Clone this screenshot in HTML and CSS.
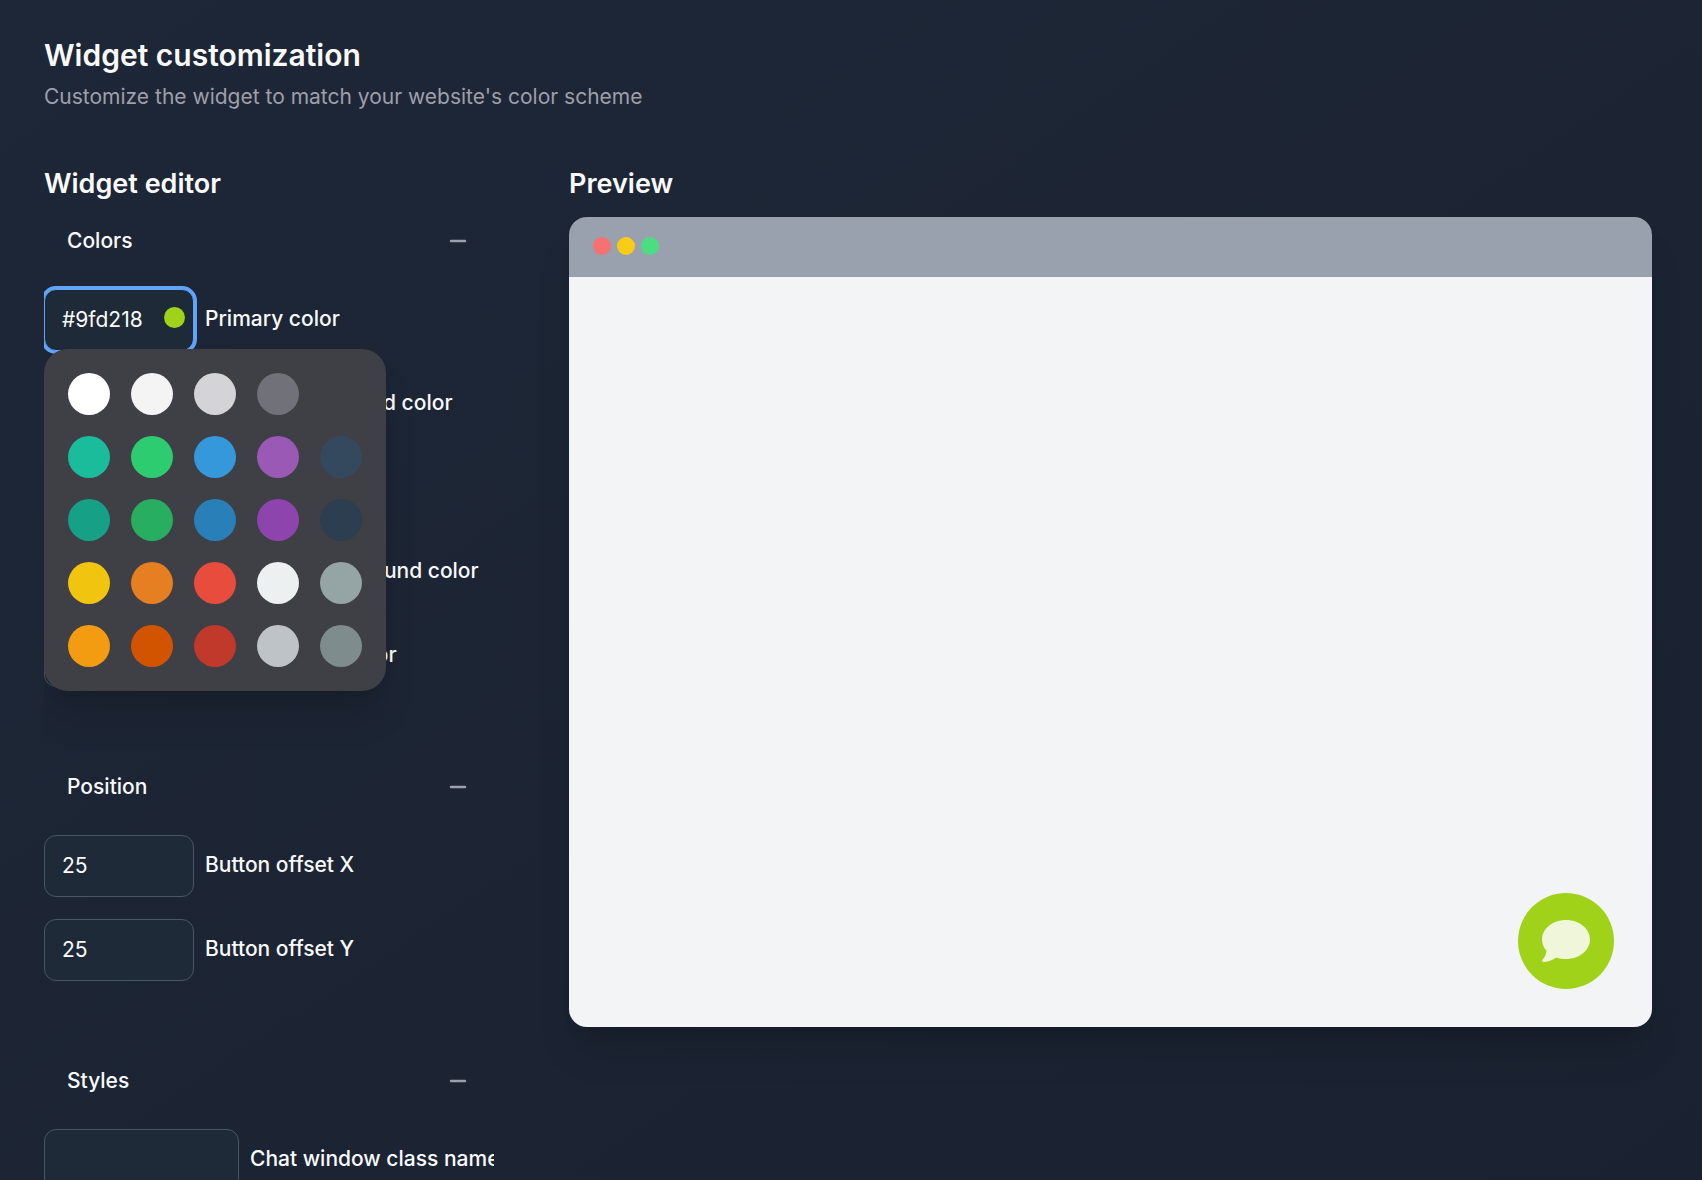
FILE: index.html
```html
<!DOCTYPE html>
<html lang="en">
<head>
    <meta charset="UTF-8">
    <meta name="viewport" content="width=device-width, initial-scale=1.0">
    <title>Widget customization</title>
    <link rel="stylesheet" href="styles.css">
</head>
<body>
    <main class="page">
        <header class="page-header">
            <h1>Widget customization</h1>
            <p>Customize the widget to match your website's color scheme</p>
        </header>

        <div class="columns">
            <section class="editor">
                <h2>Widget editor</h2>

                <div class="group">
                    <button type="button" class="group-toggle" aria-expanded="true">
                        Colors
                        <svg class="minus" viewBox="0 0 18 18" aria-hidden="true"><path d="M2 9h14"/></svg>
                    </button>
                    <div class="fields">
                        <div class="field">
                            <div class="color-input">
                                <input type="text" class="input focused" id="primary" value="#9fd218">
                                <span class="current-color"></span>
                                <div class="palette">
                                    <button type="button" class="swatch white" aria-label="White"></button>
                                    <button type="button" class="swatch gray-100" aria-label="Light gray"></button>
                                    <button type="button" class="swatch gray-300" aria-label="Gray"></button>
                                    <button type="button" class="swatch gray-500" aria-label="Medium gray"></button>
                                    <button type="button" class="swatch gray-700" aria-label="Dark gray"></button>
                                    <button type="button" class="swatch turquoise" aria-label="Turquoise"></button>
                                    <button type="button" class="swatch emerald" aria-label="Emerald"></button>
                                    <button type="button" class="swatch river" aria-label="Peter river"></button>
                                    <button type="button" class="swatch amethyst" aria-label="Amethyst"></button>
                                    <button type="button" class="swatch asphalt" aria-label="Wet asphalt"></button>
                                    <button type="button" class="swatch green-sea" aria-label="Green sea"></button>
                                    <button type="button" class="swatch nephritis" aria-label="Nephritis"></button>
                                    <button type="button" class="swatch belize" aria-label="Belize hole"></button>
                                    <button type="button" class="swatch wisteria" aria-label="Wisteria"></button>
                                    <button type="button" class="swatch midnight" aria-label="Midnight blue"></button>
                                    <button type="button" class="swatch sunflower" aria-label="Sunflower"></button>
                                    <button type="button" class="swatch carrot" aria-label="Carrot"></button>
                                    <button type="button" class="swatch alizarin" aria-label="Alizarin"></button>
                                    <button type="button" class="swatch clouds" aria-label="Clouds"></button>
                                    <button type="button" class="swatch concrete" aria-label="Concrete"></button>
                                    <button type="button" class="swatch orange" aria-label="Orange"></button>
                                    <button type="button" class="swatch pumpkin" aria-label="Pumpkin"></button>
                                    <button type="button" class="swatch pomegranate" aria-label="Pomegranate"></button>
                                    <button type="button" class="swatch silver" aria-label="Silver"></button>
                                    <button type="button" class="swatch asbestos" aria-label="Asbestos"></button>
                                </div>
                            </div>
                            <label for="primary">Primary color</label>
                        </div>
                        <div class="field">
                            <input type="text" class="input" id="button-bg" value="#9fd218">
                            <label for="button-bg">Button background color</label>
                        </div>
                        <div class="field">
                            <input type="text" class="input" id="button-text" value="#ffffff">
                            <label for="button-text">Button text color</label>
                        </div>
                        <div class="field">
                            <input type="text" class="input" id="message-bg" value="#ffffff">
                            <label for="message-bg">Message background color</label>
                        </div>
                        <div class="field">
                            <input type="text" class="input" id="message-text" value="#ffffff">
                            <label for="message-text">Message text color</label>
                        </div>
                    </div>
                </div>

                <div class="group">
                    <button type="button" class="group-toggle" aria-expanded="true">
                        Position
                        <svg class="minus" viewBox="0 0 18 18" aria-hidden="true"><path d="M2 9h14"/></svg>
                    </button>
                    <div class="fields">
                        <div class="field">
                            <input type="text" class="input" id="offset-x" value="25">
                            <label for="offset-x">Button offset X</label>
                        </div>
                        <div class="field">
                            <input type="text" class="input" id="offset-y" value="25">
                            <label for="offset-y">Button offset Y</label>
                        </div>
                    </div>
                </div>

                <div class="group">
                    <button type="button" class="group-toggle" aria-expanded="true">
                        Styles
                        <svg class="minus" viewBox="0 0 18 18" aria-hidden="true"><path d="M2 9h14"/></svg>
                    </button>
                    <div class="fields">
                        <div class="field">
                            <input type="text" class="input wide" id="class-name">
                            <label for="class-name">Chat window class name</label>
                        </div>
                    </div>
                </div>
            </section>

            <section class="preview">
                <h2>Preview</h2>
                <div class="browser">
                    <div class="browser-bar">
                        <span class="dot red"></span>
                        <span class="dot yellow"></span>
                        <span class="dot green"></span>
                    </div>
                    <div class="browser-body">
                        <button type="button" class="chat-button" aria-label="Open chat">
                            <svg viewBox="0 0 48 42" aria-hidden="true">
                                <path d="M24 0C37.3 0 48 8.700 48 19.500S37.300 39 24 39c-3.400 0-6.600-.6-9.500-1.600C10.500 40 6 42 1.500 42 0 42-.4 40.700.5 39.700 2.800 37 4.500 34 4.300 30.600 1.600 27.500 0 23.700 0 19.500 0 8.700 10.700 0 24 0z"/>
                            </svg>
                        </button>
                    </div>
                </div>
            </section>
        </div>
    </main>
</body>
</html>
```
FILE: styles.css
```css
* {
    box-sizing: border-box;
}
body {
    margin: 0;
    height: 100vh;
    overflow: hidden;
    font-family: Inter, sans-serif;
    font-size: 21px;
    line-height: 30px;
    color: #fafafa;
    background: linear-gradient(to bottom right, #1e2737, #1a2231);
}
h1, h2, p {
    margin: 0;
}
button, input {
    font: inherit;
    color: inherit;
}
.page {
    padding: 35px 50px 0 44px;
}
.page-header {
    margin-bottom: 54px;
}
h1 {
    font-size: 30px;
    line-height: 40px;
    font-weight: 600;
}
.page-header p {
    margin-top: 7px;
    color: #9f9fa9;
}
h2 {
    font-size: 27px;
    line-height: 36px;
    font-weight: 600;
}
.columns {
    display: grid;
    grid-template-columns: 450px 1fr;
    gap: 75px;
}

/* Editor */
.editor {
    overflow: hidden;
}
.editor h2 {
    margin-bottom: 12px;
}
.group {
    margin-bottom: 73px;
}
.group-toggle {
    display: flex;
    align-items: center;
    justify-content: space-between;
    width: 100%;
    height: 54px;
    padding: 0 27px 0 23px;
    border: 0;
    background: none;
    font-weight: 500;
    text-align: left;
    cursor: pointer;
}
.minus {
    width: 18px;
    height: 18px;
    stroke: #9f9fa9;
    stroke-width: 2.500;
    stroke-linecap: round;
}
.fields {
    display: flex;
    flex-direction: column;
    gap: 22px;
    padding-top: 21px;
}
.field {
    display: flex;
    align-items: center;
    gap: 11px;
}
.field label {
    padding-bottom: 2px;
    font-weight: 500;
    white-space: nowrap;
}
.input {
    display: block;
    flex-shrink: 0;
    width: 150px;
    height: 62px;
    padding: 0 17px 1px;
    border: 1px solid #4a5565;
    border-radius: 12px;
    background: #1e2a37;
    outline: none;
}
.input.wide {
    width: 195px;
}
.input.focused {
    border-color: #60a5fa;
    box-shadow: 0 0 0 3px #60a5fa;
}
.color-input {
    position: relative;
}
.current-color {
    position: absolute;
    top: 18px;
    right: 9px;
    width: 21px;
    height: 21px;
    border-radius: 50%;
    background: #9fd218;
}
.palette {
    position: absolute;
    z-index: 10;
    top: 60px;
    left: 0;
    display: grid;
    grid-template-columns: repeat(5, 42px);
    gap: 21px;
    padding: 24px;
    border-radius: 24px;
    background: #3f3f46;
    box-shadow: 0 30px 38px -8px rgba(0, 0, 0, 0.15), 0 12px 15px -9px rgba(0, 0, 0, 0.1);
}
.swatch {
    width: 42px;
    height: 42px;
    padding: 0;
    border: 0;
    border-radius: 50%;
    cursor: pointer;
}
.white { background: #ffffff; }
.gray-100 { background: #f4f4f5; }
.gray-300 { background: #d4d4d8; }
.gray-500 { background: #71717a; }
.gray-700 { background: #3f3f46; }
.turquoise { background: #1abc9c; }
.emerald { background: #2ecc71; }
.river { background: #3498db; }
.amethyst { background: #9b59b6; }
.asphalt { background: #34495e; }
.green-sea { background: #16a085; }
.nephritis { background: #27ae60; }
.belize { background: #2980b9; }
.wisteria { background: #8e44ad; }
.midnight { background: #2c3e50; }
.sunflower { background: #f1c40f; }
.carrot { background: #e67e22; }
.alizarin { background: #e74c3c; }
.clouds { background: #ecf0f1; }
.concrete { background: #95a5a6; }
.orange { background: #f39c12; }
.pumpkin { background: #d35400; }
.pomegranate { background: #c0392b; }
.silver { background: #bdc3c7; }
.asbestos { background: #7f8c8d; }

/* Preview */
.preview h2 {
    margin-bottom: 15px;
}
.browser {
    border-radius: 18px;
    overflow: hidden;
    box-shadow: 0 30px 38px -8px rgba(0, 0, 0, 0.15), 0 12px 15px -9px rgba(0, 0, 0, 0.1);
}
.browser-bar {
    display: flex;
    align-items: center;
    gap: 6px;
    height: 60px;
    padding: 0 24px 2px;
    background: #99a1af;
}
.dot {
    width: 18px;
    height: 18px;
    border-radius: 50%;
}
.red { background: #f87171; }
.yellow { background: #facc15; }
.green { background: #4ade80; }
.browser-body {
    display: flex;
    align-items: flex-end;
    justify-content: flex-end;
    height: 750px;
    padding: 38px;
    background: #f3f4f6;
}
.chat-button {
    display: flex;
    align-items: center;
    justify-content: center;
    width: 96px;
    height: 96px;
    padding: 0;
    border: 0;
    border-radius: 50%;
    background: #9fd218;
    cursor: pointer;
}
.chat-button svg {
    width: 48px;
    height: 42px;
    fill: #eff6da;
}
```
